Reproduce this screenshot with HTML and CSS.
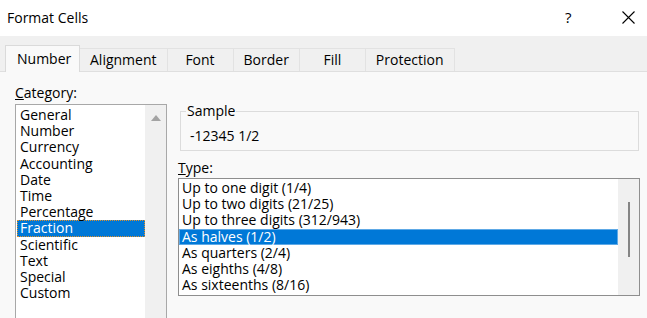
FILE: index.html
```html
<!DOCTYPE html>
<html lang="en">
<head>
  <meta charset="UTF-8" />
  <title>Format Cells</title>
  <link rel="stylesheet" href="styles.css">
</head>
<body>
  <div class="dialog">
    <div class="titlebar">
      <span class="title">Format Cells</span>
      <span class="help">?</span>
      <span class="close">
        <svg width="13" height="13" viewBox="0 0 13 13"><path d="M0.5 0.5 L12.5 12.5 M12.5 0.5 L0.5 12.5" stroke="#000" stroke-width="1.1" fill="none"/></svg>
      </span>
    </div>

    <div class="tabs">
      <div class="tab active">Number</div>
      <div class="tab">Alignment</div>
      <div class="tab">Font</div>
      <div class="tab">Border</div>
      <div class="tab">Fill</div>
      <div class="tab">Protection</div>
    </div>

    <div class="page">
      <div class="left">
        <div class="label"><u>C</u>ategory:</div>
        <div class="listbox category">
          <ul class="items">
            <li>General</li>
            <li>Number</li>
            <li>Currency</li>
            <li>Accounting</li>
            <li>Date</li>
            <li>Time</li>
            <li>Percentage</li>
            <li class="selected focus">Fraction</li>
            <li>Scientific</li>
            <li>Text</li>
            <li>Special</li>
            <li>Custom</li>
          </ul>
          <div class="scrollbar">
            <span class="arrow-up"></span>
          </div>
        </div>
      </div>

      <div class="right">
        <fieldset class="sample">
          <legend>Sample</legend>
          <div class="sample-value">-12345 1/2</div>
        </fieldset>

        <div class="label type-label"><u>T</u>ype:</div>
        <div class="listbox type">
          <ul class="items">
            <li>Up to one digit (1/4)</li>
            <li>Up to two digits (21/25)</li>
            <li>Up to three digits (312/943)</li>
            <li class="selected">As halves (1/2)</li>
            <li>As quarters (2/4)</li>
            <li>As eighths (4/8)</li>
            <li>As sixteenths (8/16)</li>
          </ul>
          <div class="scrollbar">
            <span class="thumb"></span>
          </div>
        </div>
      </div>
    </div>
  </div>
</body>
</html>
```

FILE: styles.css
```css
html, body {
  margin: 0;
  padding: 0;
}
body {
  width: 647px;
  height: 318px;
  overflow: hidden;
  background: #f9f9f9;
  font-family: "Open Sans", "Noto Sans", sans-serif;
  font-size: 14px;
  color: #000;
}
.dialog {
  display: flex;
  flex-direction: column;
  height: 318px;
  overflow: hidden;
}
.titlebar {
  flex-shrink: 0;
  height: 36px;
  background: #fff;
  display: flex;
  align-items: center;
  padding-left: 7px;
  box-sizing: border-box;
}
.title {
  flex: 1;
  font-size: 14px;
  padding-bottom: 1px;
}
.help {
  width: 10px;
  font-size: 15px;
  margin-right: 47px;
  padding-bottom: 3px;
}
.close {
  width: 13px;
  height: 13px;
  margin-right: 12px;
  margin-bottom: 2px;
  display: flex;
}
.tabs {
  flex-shrink: 0;
  height: 36px;
  background: #f0f0f0;
  display: flex;
  align-items: flex-end;
  padding-left: 5px;
  border-bottom: 1px solid #dfdfdf;
  box-sizing: border-box;
}
.tab {
  height: 23px;
  min-width: 67px;
  padding: 0 10px;
  box-sizing: border-box;
  text-align: center;
  line-height: 22px;
  border: 1px solid #e2e2e2;
  border-bottom: none;
  margin-left: -1px;
}
.tab.active {
  height: 27px;
  margin-bottom: -1px;
  background: #f9f9f9;
  border-color: #dadada;
  line-height: 25px;
  padding: 0 11px;
  width: 75px;
  margin-left: 0;
  position: relative;
  z-index: 1;
}
.page {
  flex: 1;
  min-height: 0;
  display: flex;
  padding: 12px 0 0 15px;
  gap: 11px;
}
.left {
  width: 152px;
  flex-shrink: 0;
  display: flex;
  flex-direction: column;
}
.label {
  line-height: 18px;
  height: 20px;
  flex-shrink: 0;
}
.listbox {
  flex-shrink: 0;
  background: #fff;
  border: 1px solid #a8a8a8;
  display: flex;
  box-sizing: border-box;
}
.items {
  list-style: none;
  margin: 0;
  padding: 0;
  flex: 1;
  line-height: 16.2px;
}
.items li {
  padding-left: 3px;
  height: 16.2px;
  white-space: nowrap;
}
.items li.selected {
  background: #0078d7;
  color: #fff;
  box-sizing: border-box;
  border: 1px solid #5ea9e6;
  padding-left: 2px;
  line-height: 14.2px;
}
.items li.focus {
  border: 1px dotted #e0902a;
}
.category {
  height: 230px;
}
.category .items {
  padding: 2px 0 0 1px;
}
.scrollbar {
  width: 21px;
  background: #f0f0f0;
  display: flex;
  justify-content: center;
}
.arrow-up {
  margin-top: 10px;
  width: 0;
  height: 0;
  border-left: 5px solid transparent;
  border-right: 5px solid transparent;
  border-bottom: 6px solid #a3a3a3;
}
.right {
  width: 462px;
  flex-shrink: 0;
  display: flex;
  flex-direction: column;
}
.sample {
  flex-shrink: 0;
  margin: 19px 0 0 2px;
  width: 459px;
  height: 48px;
  box-sizing: border-box;
  border: 1px solid #dcdcdc;
  padding: 0 0 0 9px;
}
.sample legend {
  padding: 0 1px;
  margin-left: -4px;
  line-height: 16px;
}
.sample-value {
  line-height: 18px;
  padding-top: 8px;
}
.type-label {
  margin-top: 8px;
  height: 19px;
}
.type {
  height: 118px;
  border-color: #8e8e8e;
}
.type .items {
  padding: 1px 0 0 0;
}
.thumb {
  margin-top: 23px;
  width: 2px;
  height: 55px;
  background: #858585;
}
```
